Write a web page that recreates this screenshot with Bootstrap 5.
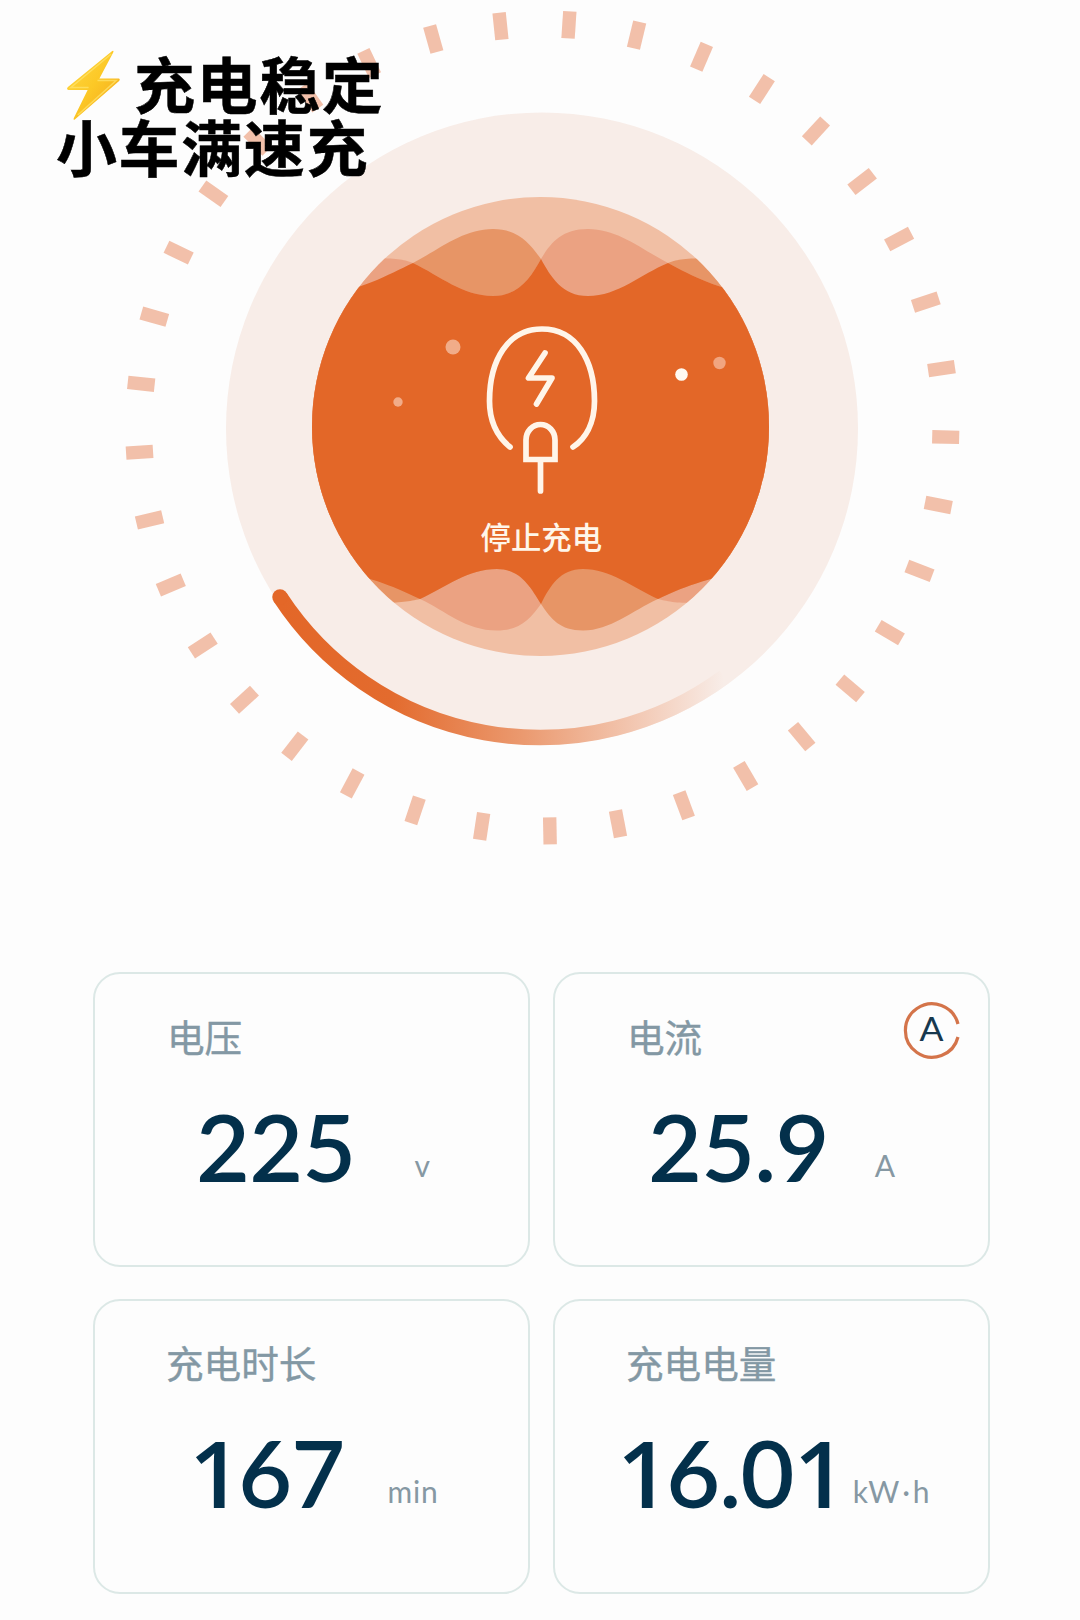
<!DOCTYPE html>
<html lang="zh-CN">
<head>
<meta charset="utf-8">
<meta name="viewport" content="width=device-width, initial-scale=1">
<title>充电状态</title>
<link href="https://cdn.jsdelivr.net/npm/bootstrap@5.3.0/dist/css/bootstrap.min.css" rel="stylesheet">
<style>
body{background:#fdfdfd;font-family:Lato,"Noto Sans CJK SC",sans-serif;width:1080px;height:1620px}
.dial{height:972px}
.dial svg{display:block}
.stop-label{font:500 30.4px "Noto Sans CJK SC",sans-serif;fill:#fff6ea}
.caption{left:56px;top:51px;font:700 61px/63px "Noto Sans CJK SC",sans-serif;letter-spacing:1.6px;color:#000;white-space:nowrap;-webkit-text-stroke:.5px #000}
.caption .bolt{width:78px;height:63px;overflow:visible;vertical-align:top}
.stats{display:grid;grid-template-columns:437px 437px;grid-auto-rows:295px;gap:32px 23px;padding-left:93px}
.stat{--bs-card-border-color:#dce8e6;--bs-card-border-width:2px;--bs-card-border-radius:27px;--bs-card-bg:#fdfdfd}
.stat-title{font:400 37.6px/44px "Noto Sans CJK SC",sans-serif;color:#8398a4;padding:40px 0 0 72px;-webkit-text-stroke:.4px #8398a4}
.row2 .stat-title{padding-left:71px;padding-top:39px}
.stat-value{font-size:93px;line-height:112px;font-weight:600;color:#03304b;letter-spacing:-.8px;margin-top:32px}
.one{font-family:"Open Sans","Noto Sans",sans-serif;font-weight:600;line-height:1;letter-spacing:-4px}
.stat-unit{font-size:30px;line-height:36px;color:#8698a3;padding-bottom:19px;letter-spacing:.8px}
.mid-dot{margin:0 2px}
.stat-badge{right:26px;top:26px}
.badge-letter{font:400 33px Lato,sans-serif;fill:#17384e}
.pos-v{padding-left:101px}.pos-v .stat-unit{margin-left:59px}
.pos-a{padding-left:93px}.pos-a .stat-unit{margin-left:46px}
.pos-m{padding-left:94px}.pos-m .stat-unit{margin-left:43px}
.pos-k{padding-left:62px}.pos-k .stat-unit{margin-left:10px}
</style>
<script src="https://cdn.jsdelivr.net/npm/bootstrap@5.3.0/dist/js/bootstrap.bundle.min.js"></script>
</head>
<body class="position-relative overflow-hidden">
<section class="dial">
<svg width="1080" height="900" viewBox="0 0 1080 900">
  <defs>
    <linearGradient id="fade" gradientUnits="userSpaceOnUse" x1="280" y1="0" x2="724" y2="0">
      <stop offset="0" stop-color="#e36728"/><stop offset=".25" stop-color="#e36b2e"/><stop offset=".55" stop-color="#eb9a70"/><stop offset=".78" stop-color="#f2c4ad"/><stop offset="1" stop-color="#f8ede8"/>
    </linearGradient>
    <clipPath id="disc"><ellipse cx="540.5" cy="426.5" rx="228.5" ry="229.5"/></clipPath>
    <path id="wa" d="M300 300C360 292 385 276 413 263C440 249 463 229 493 229C520 229 531 246 541 259C551 277 562 296 588 296C618 296 641 274 668 263C681 258 695 256 790 262V428H300Z"/>
    <path id="wb" d="M782 300C722 292 696 278 668 263C641 249 618 229 588 229C561 229 550 244 541 259C531 277 519 296 493 296C463 296 440 276 413 263C400 258 386 256 300 262V428H782Z"/>
    <path id="wd" d="M300 562C370 576 393 586 420 599C446 611 465 630.500 497 630.500C520 630.500 530 619 541 604C550 586 560 569 583 569C610 569 632 587 658 599C678 604 690 605 790 600V427H300Z"/>
    <path id="we" d="M782 562C712 576 685 586 658 599C632 611 610 630.500 583 630.500C560 630.500 551 619 541 604C530 586 520 569 497 569C468 569 446 587 420 599C402 603 390 605 300 600V427H782Z"/>
    <clipPath id="cut-top"><use href="#wb"/></clipPath>
    <clipPath id="cut-bottom"><use href="#we"/></clipPath>
  </defs>
  <g id="ticks" fill="#f2c0aa"></g>
  <circle cx="542" cy="428.500" r="316" fill="#f8ede8"/>
  <g clip-path="url(#disc)">
    <rect x="300" y="190" width="490" height="480" fill="#f1bfa4"/>
    <use href="#wa" fill="#e79566"/><use href="#wb" fill="#eba282"/>
    <use href="#wd" fill="#eba282"/><use href="#we" fill="#e79566"/>
    <g clip-path="url(#cut-top)"><use href="#wa" fill="#e36728"/></g>
    <g clip-path="url(#cut-bottom)"><use href="#wd" fill="#e36728"/></g>
  </g>
  <path d="M280 597A310.500 310.500 0 0 0 724 677" fill="none" stroke="url(#fade)" stroke-width="15.500"/>
  <circle cx="280" cy="597" r="7.750" fill="#e36728"/>
  <circle cx="453" cy="347" r="7.500" fill="#f1ac89"/><circle cx="398" cy="402" r="4.700" fill="#f1ac89"/>
  <circle cx="681.500" cy="374.500" r="6.300" fill="#fffaf2"/><circle cx="719.500" cy="363" r="6.200" fill="#f1a580"/>
  <g fill="none" stroke="#fff5e9" stroke-width="5.700" stroke-linecap="round" stroke-linejoin="round">
    <path d="M510 447C499 438 489.500 424 489.500 401C489.500 360 508 329 542 329C576 329 594.500 360 594.500 401C594.500 424 585 439 573 447"/>
    <path d="M545 353L528.500 378H552L536.500 404"/>
    <path stroke-linejoin="miter" d="M526 459.500V440A14.500 15.500 0 0 1 555 440V459.500Z"/><path d="M540.500 461V491"/>
  </g>
  <text class="stop-label" x="480.500" y="549">停止充电</text>
</svg>
</section>
<div class="caption position-absolute">
  <div><svg class="bolt" viewBox="0 0 77 64"><defs><linearGradient id="gold" x1="0" y1="0" x2="1" y2="1"><stop offset="0" stop-color="#ffda45"/><stop offset=".5" stop-color="#fcc826"/><stop offset="1" stop-color="#f2a31d"/></linearGradient></defs>
  <path d="M56 0Q58-1 57 1.500L43 28H62.500Q64.500 28.500 63 30.500L18 69.500Q16 70.500 17 68L31 39.500H11.500Q9 39 11 36.500Z" fill="url(#gold)"/><path d="M55 3L14 37H32M41 30H60L21 65" fill="none" stroke="#ffe36b" stroke-width="1.500" opacity=".75"/></svg>充电稳定</div>
  <div>小车满速充</div>
</div>
<main class="stats">
  <div class="card stat"><div class="stat-title">电压</div><div class="d-flex align-items-end pos-v"><div class="stat-value">225</div><div class="stat-unit">v</div></div></div>
  <div class="card stat"><div class="stat-title">电流</div><div class="d-flex align-items-end pos-a"><div class="stat-value">25.9</div><div class="stat-unit">A</div></div>
    <svg class="stat-badge position-absolute" width="60" height="60" viewBox="0 0 60 60"><path d="M56 24A26.700 26.700 0 1 0 56 37" fill="none" stroke="#d4744a" stroke-width="3.200"/><text class="badge-letter" x="29.500" y="41" text-anchor="middle" textLength="24" lengthAdjust="spacingAndGlyphs">A</text></svg></div>
  <div class="card stat row2"><div class="stat-title">充电时长</div><div class="d-flex align-items-end pos-m"><div class="stat-value"><span class="one">1</span>67</div><div class="stat-unit">min</div></div></div>
  <div class="card stat row2"><div class="stat-title">充电电量</div><div class="d-flex align-items-end pos-k"><div class="stat-value"><span class="one">1</span>6.0<span class="one">1</span></div><div class="stat-unit">kW<span class="mid-dot">·</span>h</div></div></div>
</main>
<script>
const ticks=document.getElementById('ticks'),count=37;
for(let i=0;i<count;i++){
  const deg=1.35+i*360/count,a=deg*Math.PI/180;
  const x=542.3+403.5*Math.cos(a),y=427.5+403.5*Math.sin(a);
  const r=document.createElementNS('http://www.w3.org/2000/svg','rect');
  r.setAttribute('x',-13.5);r.setAttribute('y',-6.7);r.setAttribute('width',27);r.setAttribute('height',13.4);
  r.setAttribute('transform',`translate(${x} ${y}) rotate(${deg})`);
  ticks.appendChild(r);
}
</script>
</body>
</html>
